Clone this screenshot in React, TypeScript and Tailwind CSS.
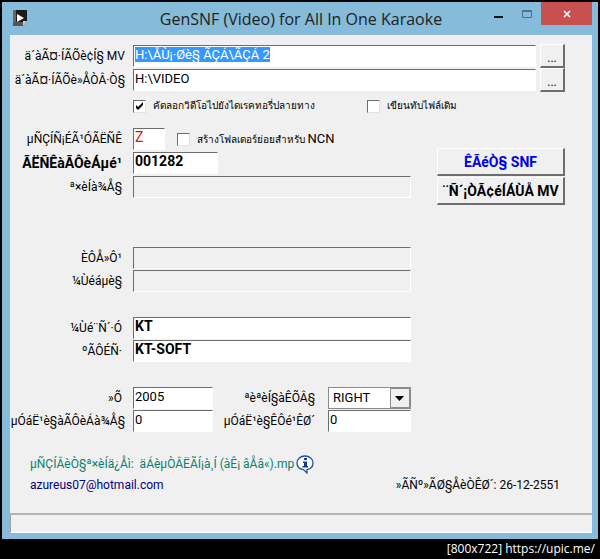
import { useEffect, useRef } from 'react'
import type { InputHTMLAttributes, ReactNode, Ref } from 'react'

const sunken =
  'h-[22px] border border-t-[#6d6d6d] border-l-[#6d6d6d] border-r-white border-b-white px-px pb-1 outline-none'
const raised =
  'border border-t-white border-l-white border-r-[#6d6d6d] border-b-[#6d6d6d] border-r-2 border-b-2 bg-[#f0f0f0]'

interface FieldProps extends InputHTMLAttributes<HTMLInputElement> {
  id: string
  label: string
  labelClass?: string
  inputClass?: string
  inputRef?: Ref<HTMLInputElement>
  children?: ReactNode
}

function Field({
  id,
  label,
  labelClass = 'w-[115px] pr-[3px]',
  inputClass = 'w-[278px] bg-white text-[13px]',
  inputRef,
  children,
  ...rest
}: FieldProps) {
  return (
    <div className="flex items-center">
      <label htmlFor={id} className={`flex shrink-0 justify-end whitespace-nowrap ${labelClass}`}>
        {label}
      </label>
      <input ref={inputRef} id={id} type="text" className={`ml-2 ${sunken} ${inputClass}`} {...rest} />
      {children}
    </div>
  )
}

function Check({ children, checked }: { children: ReactNode; checked?: boolean }) {
  return (
    <label className="flex items-center gap-[7px] whitespace-nowrap">
      <span className="grid">
        <input
          type="checkbox"
          defaultChecked={checked}
          className="peer col-start-1 row-start-1 size-[13px] appearance-none border border-t-[#6d6d6d] border-l-[#6d6d6d] border-r-[#e3e3e3] border-b-[#e3e3e3] bg-white"
        />
        <svg
          viewBox="0 0 13 13"
          className="pointer-events-none invisible col-start-1 row-start-1 size-[13px] peer-checked:visible"
        >
          <path d="M3 5v3l2 2 5-5V2L5 7z" fill="#000" />
        </svg>
      </span>
      <span className="text-[10px]">{children}</span>
    </label>
  )
}

function Browse({ label }: { label: string }) {
  return (
    <button
      type="button"
      aria-label={label}
      className={`ml-1 h-6 w-[25px] shrink-0 pt-1 text-[12px] leading-4 ${raised}`}
    >
      ...
    </button>
  )
}

export default function App() {
  const sourceRef = useRef<HTMLInputElement>(null)

  // the source folder starts out focused and selected
  useEffect(() => {
    sourceRef.current?.focus()
    sourceRef.current?.select()
  }, [])

  return (
    <div className="min-h-screen bg-black px-[2px] pt-[2px] font-['Roboto','Noto_Sans',sans-serif] text-[12px] leading-4 text-black">
      <main className="border-r-[6px] border-b-[6px] border-l-8 border-[#86bbda] bg-[#f0f0f0]">
        <header className="flex h-[33px] items-start bg-[#86bbda]">
          <svg viewBox="0 0 14 16" className="mt-2 ml-[3px] h-4 w-[14px]">
            <path d="M0 0h14v11l-4 5H0z" fill="#1b1b1b" />
            <path d="M0 0h3v16H0z" fill="#666" />
            <path d="M0 12h10v4H0z" fill="#555" />
            <path d="M4 4l7 4-7 4z" fill="#fff" />
            <path d="M14 11l-4 5v-5z" fill="#ccc" />
          </svg>
          <h1 className="flex-1 pt-[5px] pl-[92px] text-center font-['Open_Sans',sans-serif] text-[16px] leading-6 whitespace-nowrap text-[#222]">
            GenSNF (Video) for All In One Karaoke
          </h1>
          <div className="flex h-[23px]">
            <button type="button" aria-label="Minimize" className="grid w-[29px] place-items-center">
              <svg viewBox="0 0 10 10" className="size-[10px]">
                <path d="M1 7h9v2H1z" fill="#111" />
              </svg>
            </button>
            <button type="button" aria-label="Maximize" className="grid w-[29px] place-items-center">
              <svg viewBox="0 0 10 8" className="h-2 w-[10px]">
                <path d="M.5 .5h9v7h-9zM.5 1.5h9" fill="none" stroke="#4f7288" />
              </svg>
            </button>
            <button type="button" aria-label="Close" className="grid w-[51px] place-items-center bg-[#c75050]">
              <svg viewBox="0 0 8 8" className="size-2">
                <path d="M1 1l6 6M7 1L1 7" stroke="#fff" strokeWidth="1.6" />
              </svg>
            </button>
          </div>
        </header>

        <form>
          <div className="flex flex-col pt-[9px] pr-[27px]">
            <Field
              id="source"
              label="ä´àÃ¤·ÍÃÕè¢Í§ MV"
              defaultValue="H:\ÅÙ¡·Øè§ ÃÇÁ\ÃÇÁ 2"
              labelClass="w-[115px]"
              inputClass="flex-1 bg-white text-[13px] selection:bg-[#3399ff] selection:text-white"
              inputRef={sourceRef}
            >
              <Browse label="Browse source" />
            </Field>
            <Field
              id="target"
              label="ä´àÃ¤·ÍÃÕè»ÅÒÂ·Ò§"
              defaultValue="H:\VIDEO"
              labelClass="w-[115px]"
              inputClass="flex-1 bg-white text-[13px]"
            >
              <Browse label="Browse target" />
            </Field>
          </div>

          <div className="mt-[6px] flex h-4 gap-[52px] pl-[123px]">
            <Check checked>คัดลอกวิดีโอไปยังไดเรคทอรี่ปลายทาง</Check>
            <Check>เขียนทับไฟล์เดิม</Check>
          </div>

          <div className="mt-[14px] flex h-[78px] items-start justify-between pr-[27px]">
            <div className="flex flex-col gap-0.5">
              <Field
                id="prefix"
                label="µÑÇÍÑ¡ÉÃ¹ÓÃËÑÊ"
                defaultValue="Z"
                inputClass="mr-3 w-8 bg-white text-[14px] text-[#e01010]"
              >
                <Check>
                  สร้างโฟลเดอร์ย่อยสำหรับ <span className="text-[13px]">NCN</span>
                </Check>
              </Field>
              <Field
                id="code"
                label="ÃËÑÊàÃÔèÁµé¹"
                defaultValue="001282"
                labelClass="w-[115px] pr-[3px] text-[14px] font-bold"
                inputClass="w-[85px] bg-white text-[14px] font-bold"
              />
              <Field id="song" label="ª×èÍà¾Å§" readOnly inputClass="w-[278px] bg-[#f0f0f0] text-[13px]" />
            </div>
            <div className="mt-5 flex w-32 flex-col gap-px text-[14px] font-bold whitespace-nowrap">
              <button type="button" className={`h-7 text-[#0000e6] ${raised}`}>
                ÊÃéÒ§ SNF
              </button>
              <button type="button" className={`h-7 ${raised}`}>
                ¨Ñ´¡ÒÃ¢éÍÁÙÅ MV
              </button>
            </div>
          </div>

          <div className="mt-[41px] flex flex-col gap-px">
            <Field id="artist" label="ÈÔÅ»Ô¹" readOnly inputClass="w-[278px] bg-[#f0f0f0] text-[13px]" />
            <Field id="composer" label="¼Ùéáµè§" readOnly inputClass="w-[278px] bg-[#f0f0f0] text-[13px]" />
          </div>

          <div className="mt-[25px] flex flex-col gap-px">
            <Field
              id="maker"
              label="¼Ùé¨Ñ´·Ó"
              defaultValue="KT"
              inputClass="w-[278px] bg-white text-[14px] font-bold"
            />
            <Field
              id="company"
              label="ºÃÔÉÑ·"
              defaultValue="KT-SOFT"
              inputClass="w-[278px] bg-white text-[14px] font-bold"
            />
          </div>

          <div className="mt-[25px] flex flex-col gap-px">
            <div className="flex">
              <Field id="year" label="»Õ" defaultValue="2005" inputClass="w-20 bg-white text-[13px]" />
              <label htmlFor="channel" className="w-[102px] self-center text-right whitespace-nowrap">
                ªèªèÍ§àÊÕÂ§
              </label>
              <div className="ml-[13px] grid w-[83px]">
                <select
                  id="channel"
                  defaultValue="RIGHT"
                  className="col-start-1 row-start-1 h-[22px] appearance-none border border-[#8a8a8a] bg-white pl-1 text-[13px] outline-none"
                >
                  <option>RIGHT</option>
                  <option>LEFT</option>
                </select>
                <svg
                  viewBox="0 0 20 20"
                  className="pointer-events-none col-start-1 row-start-1 mt-px mr-px size-5 justify-self-end"
                >
                  <path d="M.5 .5h19v19H.5z" fill="#f0f0f0" stroke="#8a8a8a" />
                  <path d="M5 8h9l-4.500 5z" fill="#000" />
                </svg>
              </div>
            </div>
            <div className="flex">
              <Field
                id="start"
                label="µÓáË¹è§àÃÔèÁà¾Å§"
                defaultValue="0"
                labelClass="w-[115px]"
                inputClass="w-20 bg-white text-[13px]"
              />
              <Field
                id="end"
                label="µÓáË¹è§ÊÔé¹ÊØ´"
                defaultValue="0"
                labelClass="w-[107px] pr-[5px]"
                inputClass="w-[83px] bg-white text-[13px]"
              />
            </div>
          </div>
        </form>

        <div className="mt-[22px] flex h-5 items-center pl-5">
          <p className="w-[266px] whitespace-pre text-[#0a8070]">
            {'µÑÇÍÂèÒ§ª×èÍä¿Åì:  äÁèµÒÂËÃÍ¡à¸Í (àÊ¡ âÅâ«).mp'}
          </p>
          <svg viewBox="0 0 18 19" className="h-[19px] w-[18px]">
            <path
              d="M9 1c4.500 0 8 3 8 7 0 3.500-2.500 6-6 6.600V18l-3.500-3.400C3.500 14 1 11.500 1 8c0-4 3.500-7 8-7z"
              fill="#fff"
              stroke="#1d4fa8"
              strokeWidth="1.300"
            />
            <path d="M8 3h3v2H8zM7 6.500h4V11h1v1.500H6.500V11H8V8H7z" fill="#0b3aa6" />
          </svg>
        </div>
        <div className="flex justify-between pt-[3px] pr-8 pl-5">
          <a href="mailto:azureus07@hotmail.com" className="text-[#000080]">
            azureus07@hotmail.com
          </a>
          <p>»ÃÑº»ÃØ§ÅèÒÊØ´: 26-12-2551</p>
        </div>
        <div className="mt-5 h-5 border-t-2 border-b border-l border-t-[#b5b5b5] border-b-white border-l-[#a0a0a0]" />
      </main>
      <footer className="pr-[3px] text-right font-['Open_Sans',sans-serif] text-[12px] leading-5 text-white">
        [800x722] https://upic.me/
      </footer>
    </div>
  )
}
